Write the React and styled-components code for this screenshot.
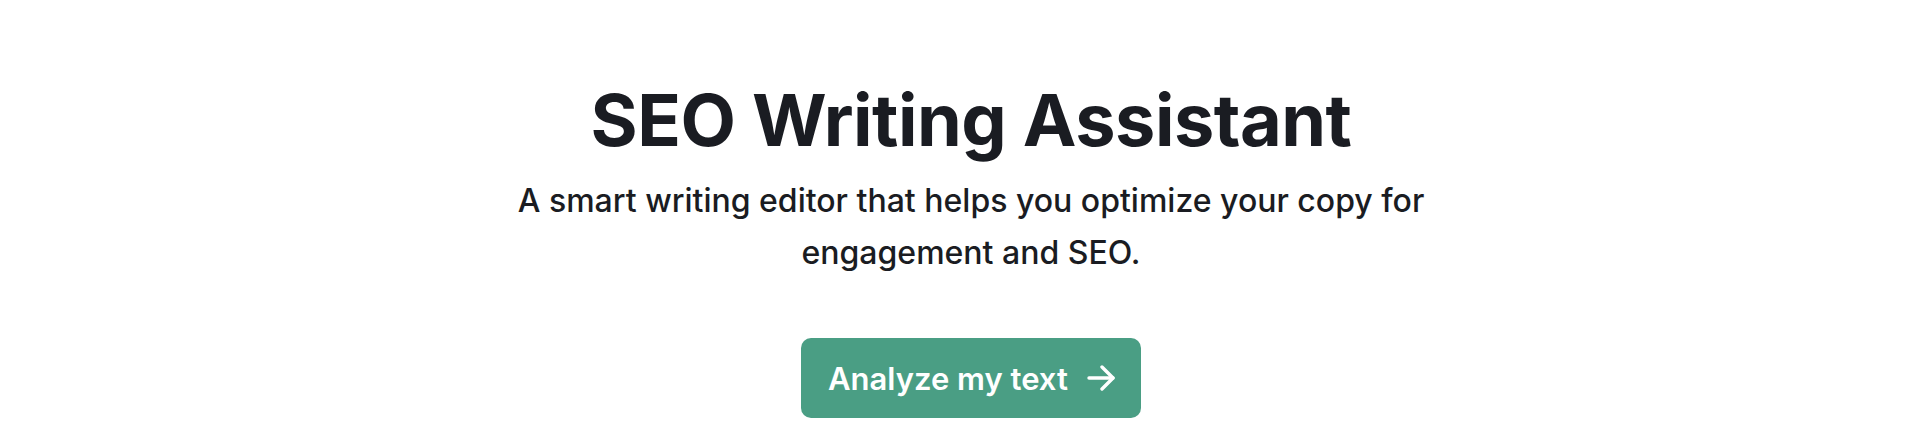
import React from "react";
import styled, { createGlobalStyle } from "styled-components";

const Global = createGlobalStyle`
  html, body { margin: 0; padding: 0; background: #ffffff; }
  body { font-family: Inter, "Noto Sans", sans-serif; -webkit-font-smoothing: antialiased; }
`;

const Hero = styled.section`
  display: flex;
  flex-direction: column;
  align-items: center;
  padding: 77px 0 0 20px;
  text-align: center;
`;

const Title = styled.h1`
  margin: 0;
  font-family: Inter, sans-serif;
  font-size: 72px;
  font-weight: 700;
  line-height: 86px;
  letter-spacing: -0.5px;
  color: #1a1c22;
`;

const Subtitle = styled.p`
  margin: 12px 0 0;
  max-width: 940px;
  font-family: Inter, sans-serif;
  font-size: 32px;
  font-weight: 500;
  line-height: 52px;
  color: #1a1c22;
`;

const Button = styled.button`
  margin-top: 59px;
  display: inline-flex;
  align-items: center;
  gap: 19px;
  height: 80px;
  padding: 0 26px 0 27px;
  border: none;
  border-radius: 10px;
  background: #4a9e84;
  color: #ffffff;
  font-family: Inter, sans-serif;
  font-size: 31px;
  font-weight: 600;
  cursor: pointer;
`;

const Arrow = () => (
  <svg width="28" height="28" viewBox="0 0 28 28" fill="none" stroke="#ffffff" strokeWidth="3.4" strokeLinecap="round" strokeLinejoin="round">
    <path d="M2 14h24" />
    <path d="M15 3l11 11-11 11" />
  </svg>
);

export default function App() {
  return (
    <>
      <Global />
      <Hero>
        <Title>SEO Writing Assistant</Title>
        <Subtitle>
          A smart writing editor that helps you optimize your copy for engagement and SEO.
        </Subtitle>
        <Button>
          Analyze my text
          <Arrow />
        </Button>
      </Hero>
    </>
  );
}
